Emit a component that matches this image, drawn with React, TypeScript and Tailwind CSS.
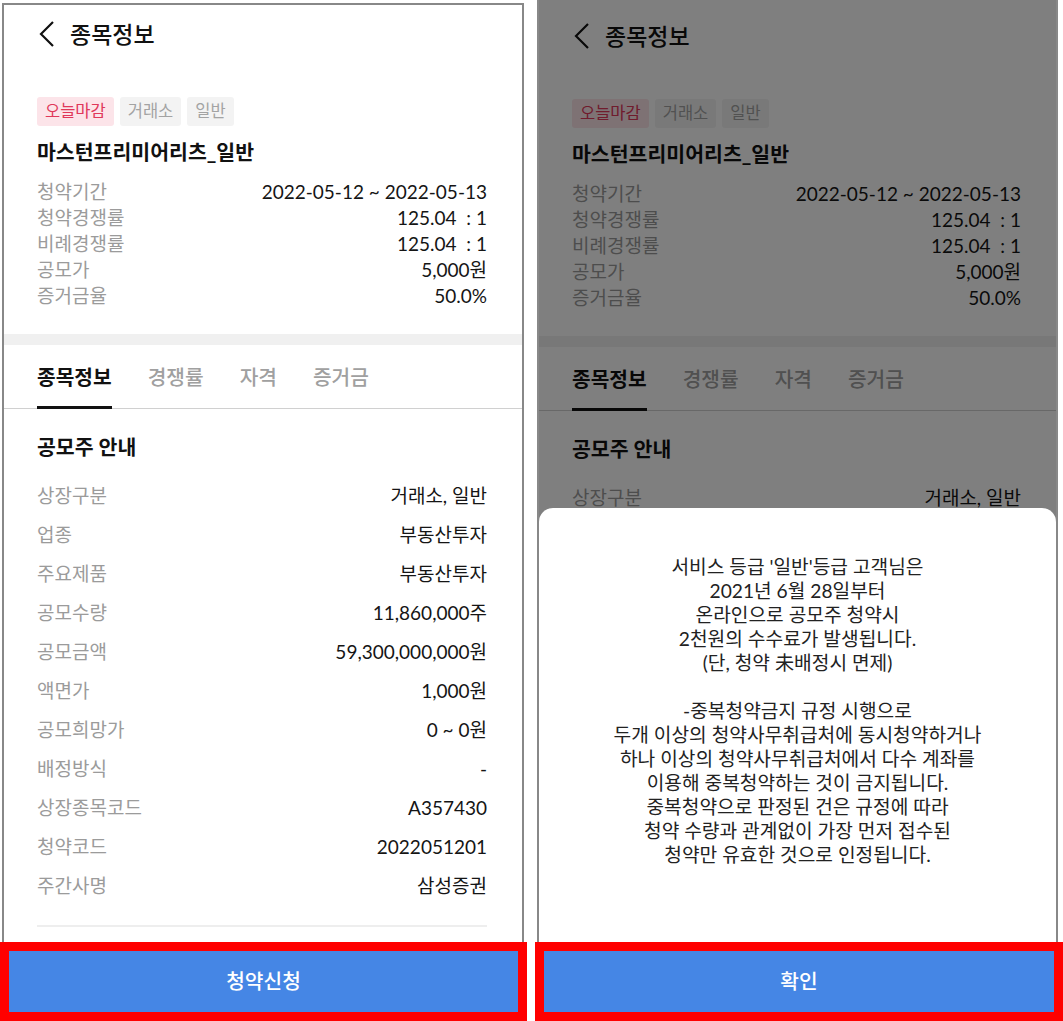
const SUMMARY = [
  { label: "청약기간", value: "2022-05-12 ~ 2022-05-13" },
  { label: "청약경쟁률", value: "125.04  : 1" },
  { label: "비례경쟁률", value: "125.04  : 1" },
  { label: "공모가", value: "5,000원" },
  { label: "증거금율", value: "50.0%" },
];

const DETAILS = [
  { label: "상장구분", value: "거래소, 일반" },
  { label: "업종", value: "부동산투자" },
  { label: "주요제품", value: "부동산투자" },
  { label: "공모수량", value: "11,860,000주" },
  { label: "공모금액", value: "59,300,000,000원" },
  { label: "액면가", value: "1,000원" },
  { label: "공모희망가", value: "0 ~ 0원" },
  { label: "배정방식", value: "-" },
  { label: "상장종목코드", value: "A357430" },
  { label: "청약코드", value: "2022051201" },
  { label: "주간사명", value: "삼성증권" },
];

const NOTICE = [
  "서비스 등급 '일반'등급 고객님은",
  "2021년 6월 28일부터",
  "온라인으로 공모주 청약시",
  "2천원의 수수료가 발생됩니다.",
  "(단, 청약 未배정시 면제)",
  "",
  "-중복청약금지 규정 시행으로",
  "두개 이상의 청약사무취급처에 동시청약하거나",
  "하나 이상의 청약사무취급처에서 다수 계좌를",
  "이용해 중복청약하는 것이 금지됩니다.",
  "중복청약으로 판정된 건은 규정에 따라",
  "청약 수량과 관계없이 가장 먼저 접수된",
  "청약만 유효한 것으로 인정됩니다.",
];

function PhoneContent() {
  return (
    <div className="flex flex-col">
      <header className="h-[58px] flex items-center pl-[35px]">
        <svg width="16" height="28" viewBox="0 0 16 28" fill="none">
          <path d="M14 2 L2 14 L14 26" stroke="#111" strokeWidth="2.2" />
        </svg>
        <span className="ml-[15px] text-[23px] font-medium text-[#111]">종목정보</span>
      </header>

      <div className="pl-[33px] pr-[35px]">
        <div className="mt-[34px] flex gap-[6px] text-[16.5px]">
          <span className="h-[29px] px-2 flex items-center rounded-[3px] bg-[#fce4e9] text-[#e0385a]">오늘마감</span>
          <span className="h-[29px] px-2 flex items-center rounded-[3px] bg-[#f3f3f3] text-[#a3a3a3]">거래소</span>
          <span className="h-[29px] px-2 flex items-center rounded-[3px] bg-[#f3f3f3] text-[#a3a3a3]">일반</span>
        </div>
        <div className="mt-[12px] text-[20.5px] leading-[28px] font-bold text-[#111]">
          마스턴프리미어리츠_일반
        </div>
        <div className="mt-[13px] text-[19px]">
          {SUMMARY.map((row) => (
            <div key={row.label} className="h-[26px] flex items-center justify-between">
              <span className="text-[#9b9b9b]">{row.label}</span>
              <span className="text-[#151515] whitespace-pre">{row.value}</span>
            </div>
          ))}
        </div>
      </div>

      <div className="mt-[25px] h-[11px] bg-[#f0f0f0]" />

      <nav className="h-[64px] flex gap-[36px] pl-[33px] border-b border-[#d0d0d0] text-[20.3px]">
        <div className="relative h-full flex items-center pt-[1px] font-bold text-[#111]">
          종목정보
          <div className="absolute left-0 right-0 bottom-[-1px] h-[3px] bg-[#111]" />
        </div>
        <div className="h-full flex items-center pt-[1px] font-medium text-[#a0a0a0]">경쟁률</div>
        <div className="h-full flex items-center pt-[1px] font-medium text-[#a0a0a0]">자격</div>
        <div className="h-full flex items-center pt-[1px] font-medium text-[#a0a0a0]">증거금</div>
      </nav>

      <div className="pl-[33px] pr-[35px]">
        <h2 className="mt-[24px] text-[20.5px] leading-[28px] font-bold text-[#111]">공모주 안내</h2>
        <div className="mt-[16px] text-[19px]">
          {DETAILS.map((row) => (
            <div key={row.label} className="h-[39px] flex items-center justify-between">
              <span className="text-[#9b9b9b]">{row.label}</span>
              <span className="text-[#151515]">{row.value}</span>
            </div>
          ))}
        </div>
        <div className="mt-[19px] h-[2px] bg-[#eeeeee]" />
      </div>
    </div>
  );
}

function ActionButton({ label }: { label: string }) {
  return (
    <button className="h-[79px] w-full border-[9px] border-[#ff0000] bg-[#4586e5] flex items-center justify-center text-white text-[20.3px] font-medium">
      {label}
    </button>
  );
}

export default function App() {
  return (
    <div className="w-[1063px] h-[1021px] bg-white flex gap-[8px] font-['Lato','Noto_Sans_CJK_KR',sans-serif] overflow-hidden">
      {/* before */}
      <div className="w-[527px] flex flex-col">
        <div className="ml-[2px] mt-[3px] w-[522px] h-[939px] border-t-2 border-x-2 border-[#888888] overflow-hidden bg-white">
          <PhoneContent />
        </div>
        <ActionButton label="청약신청" />
      </div>

      {/* after: notice sheet open */}
      <div className="w-[528px] flex flex-col">
        <div className="relative ml-[2px] w-[521px] h-[942px] border-x-2 border-[#888888] overflow-hidden bg-white">
          <div className="pt-[7px]">
            <PhoneContent />
          </div>
          <div className="absolute inset-0 bg-black/50" />
          <div className="absolute left-0 right-0 top-[508px] bottom-0 rounded-t-[14px] bg-white pt-[47px] text-center text-[19.2px] leading-[24px] text-[#222]">
            {NOTICE.map((line, i) => (
              <div key={i} className="h-[24px]">
                {line}
              </div>
            ))}
          </div>
        </div>
        <ActionButton label="확인" />
      </div>
    </div>
  );
}
